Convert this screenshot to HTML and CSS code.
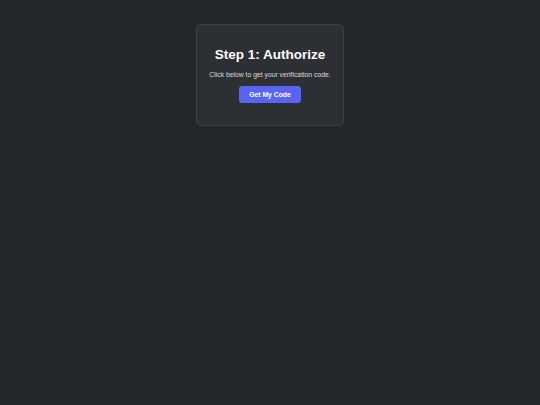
FILE: index.html
```html
<!DOCTYPE html>
<html>
<head>
<meta charset="utf-8">
<link rel="stylesheet" href="styles.css">
</head>
<body>
<div class="page">
  <div class="card">
    <h1 class="title">Step 1: Authorize</h1>
    <p class="desc">Click below to get your verification code.</p>
    <button class="btn">Get My Code</button>
  </div>
</div>
</body>
</html>
```
FILE: styles.css
```css
html, body {
  margin: 0;
  padding: 0;
  background: #23272a;
  height: 100%;
}
.page {
  display: flex;
  flex-direction: column;
  align-items: center;
  padding-top: 24px;
  font-family: "Liberation Sans", Arial, sans-serif;
}
.card {
  box-sizing: border-box;
  width: 148px;
  background: #2c2f33;
  border: 1px solid #3d4147;
  border-radius: 5px;
  padding: 22px 10px 22px;
  display: flex;
  flex-direction: column;
  align-items: center;
}
.title {
  margin: 0;
  color: #ffffff;
  font-size: 13.5px;
  font-weight: bold;
  line-height: 16px;
}
.desc {
  margin: 7px 0 0;
  color: #dcddde;
  font-size: 6.8px;
  line-height: 9px;
  white-space: nowrap;
}
.btn {
  margin-top: 7px;
  width: 62px;
  height: 17px;
  padding: 0;
  background: #5865f2;
  border: none;
  border-radius: 3px;
  color: #ffffff;
  font-family: "Liberation Sans", Arial, sans-serif;
  font-size: 6.8px;
  font-weight: bold;
}
```
